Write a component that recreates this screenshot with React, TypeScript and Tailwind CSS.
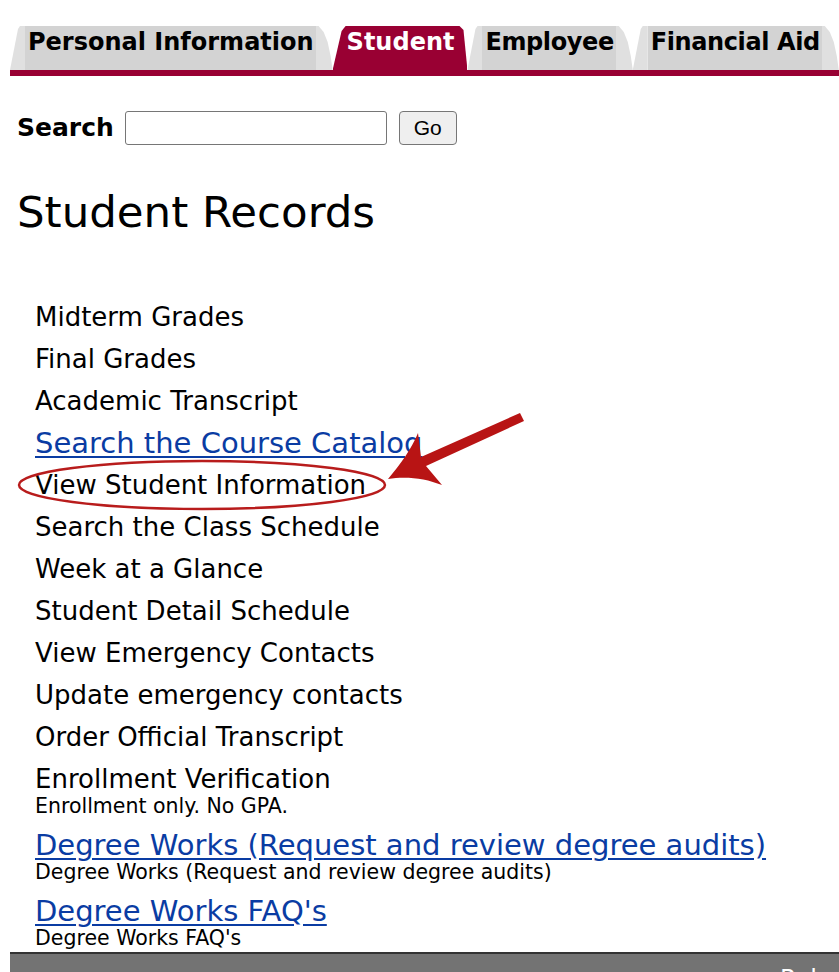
import React from 'react';

const items = [
  { label: 'Midterm Grades' },
  { label: 'Final Grades' },
  { label: 'Academic Transcript' },
  { label: 'Search the Course Catalog', link: true },
  { label: 'View Student Information' },
  { label: 'Search the Class Schedule' },
  { label: 'Week at a Glance' },
  { label: 'Student Detail Schedule' },
  { label: 'View Emergency Contacts' },
  { label: 'Update emergency contacts' },
  { label: 'Order Official Transcript' },
  { label: 'Enrollment Verification', desc: 'Enrollment only. No GPA.' },
  {
    label: 'Degree Works (Request and review degree audits)',
    link: true,
    desc: 'Degree Works (Request and review degree audits)',
  },
  { label: "Degree Works FAQ's", link: true, desc: "Degree Works FAQ's" },
];

const GrayTab = ({ label, tight }: { label: string; tight?: boolean }) => (
  <div className="flex h-[44px]">
    <div className="w-[15px] bg-[#e0e0e0] [clip-path:polygon(8px_3px,10px_0,15px_0,15px_100%,0_100%)]" />
    <div
      className={`bg-[#d3d3d3] pl-[3px] pr-[2px] pt-[1px] text-[24px] leading-[30px] font-bold text-black ${
        tight ? 'tracking-[-0.4px]' : ''
      }`}
    >
      {label}
    </div>
    <div className="w-[17px] bg-[#e0e0e0] [clip-path:polygon(0_0,3px_0,8px_6px,12px_16px,15px_30px,17px_100%,0_100%)]" />
  </div>
);

const App = () => {
  return (
    <div className="relative w-[839px] h-[972px] overflow-hidden bg-white text-black font-['DejaVu_Sans',Verdana,sans-serif]">
      {/* tabs */}
      <div className="ml-[10px] mt-[26px] flex items-end whitespace-nowrap">
        <GrayTab label="Personal Information" />
        <div className="h-[44px] bg-[#990033] pl-[14px] pr-[13px] pt-[1px] text-[24px] leading-[30px] font-bold text-white [clip-path:polygon(0_100%,9px_5px,13px_0,calc(100%_-_8px)_0,calc(100%_-_4px)_4px,100%_100%)]">
          Student
        </div>
        <GrayTab label="Employee" tight />
        <GrayTab label="Financial Aid" tight />
      </div>
      <div className="ml-[10px] h-[6px] bg-[#990033]" />

      {/* search */}
      <div className="mt-[35px] ml-[17px] flex items-center h-[34px]">
        <span className="text-[25px] font-bold">Search</span>
        <input
          type="text"
          className="ml-[11px] w-[262px] h-[34px] border border-[#767676] rounded-[3px] bg-white"
        />
        <button className="ml-[12px] w-[58px] h-[34px] border border-[#767676] rounded-[4px] bg-[#efefef] text-[21px] font-['Liberation_Sans',Arial,sans-serif] text-black">
          Go
        </button>
      </div>

      <h1 className="mt-[42px] ml-[17px] text-[43.5px] leading-[50px] font-normal">Student Records</h1>

      {/* menu list */}
      <div className="mt-[59px] ml-[35px]">
        {items.map((item) => (
          <div key={item.label} className="py-[6px]">
            {item.link ? (
              <a href="#" className="block text-[29px] leading-[30px] text-[#0a3ca3] underline underline-offset-[3px]">
                {item.label}
              </a>
            ) : (
              <div className="text-[26px] leading-[30px]">{item.label}</div>
            )}
            {item.desc && <div className="text-[20.5px] leading-[24px]">{item.desc}</div>}
          </div>
        ))}
      </div>

      {/* footer */}
      <div className="-mt-[4px] ml-[10px] flex items-start">
        <div className="mt-[4px] w-[8px] h-[6px] bg-[#990033]" />
        <div className="flex-1 h-[40px] border-t-2 border-[#333333] bg-[#737373] pl-[770px] pt-[10px] text-[24px] leading-[30px] text-white whitespace-nowrap">
          Release: 8.9.1
        </div>
      </div>

      {/* annotation */}
      <svg
        className="absolute left-0 top-0 pointer-events-none"
        width="839"
        height="972"
        viewBox="0 0 839 972"
      >
        <ellipse cx="202" cy="485" rx="183" ry="24" fill="none" stroke="#b81c1c" strokeWidth="2.5" />
        <path
          d="M388 479 C400 465 412 448 418 433 L421 457 L520 413 L524 421 L426 466 L442 485 C425 478 405 476 388 479 Z"
          fill="#b81414"
        />
      </svg>
    </div>
  );
};

export default App;
